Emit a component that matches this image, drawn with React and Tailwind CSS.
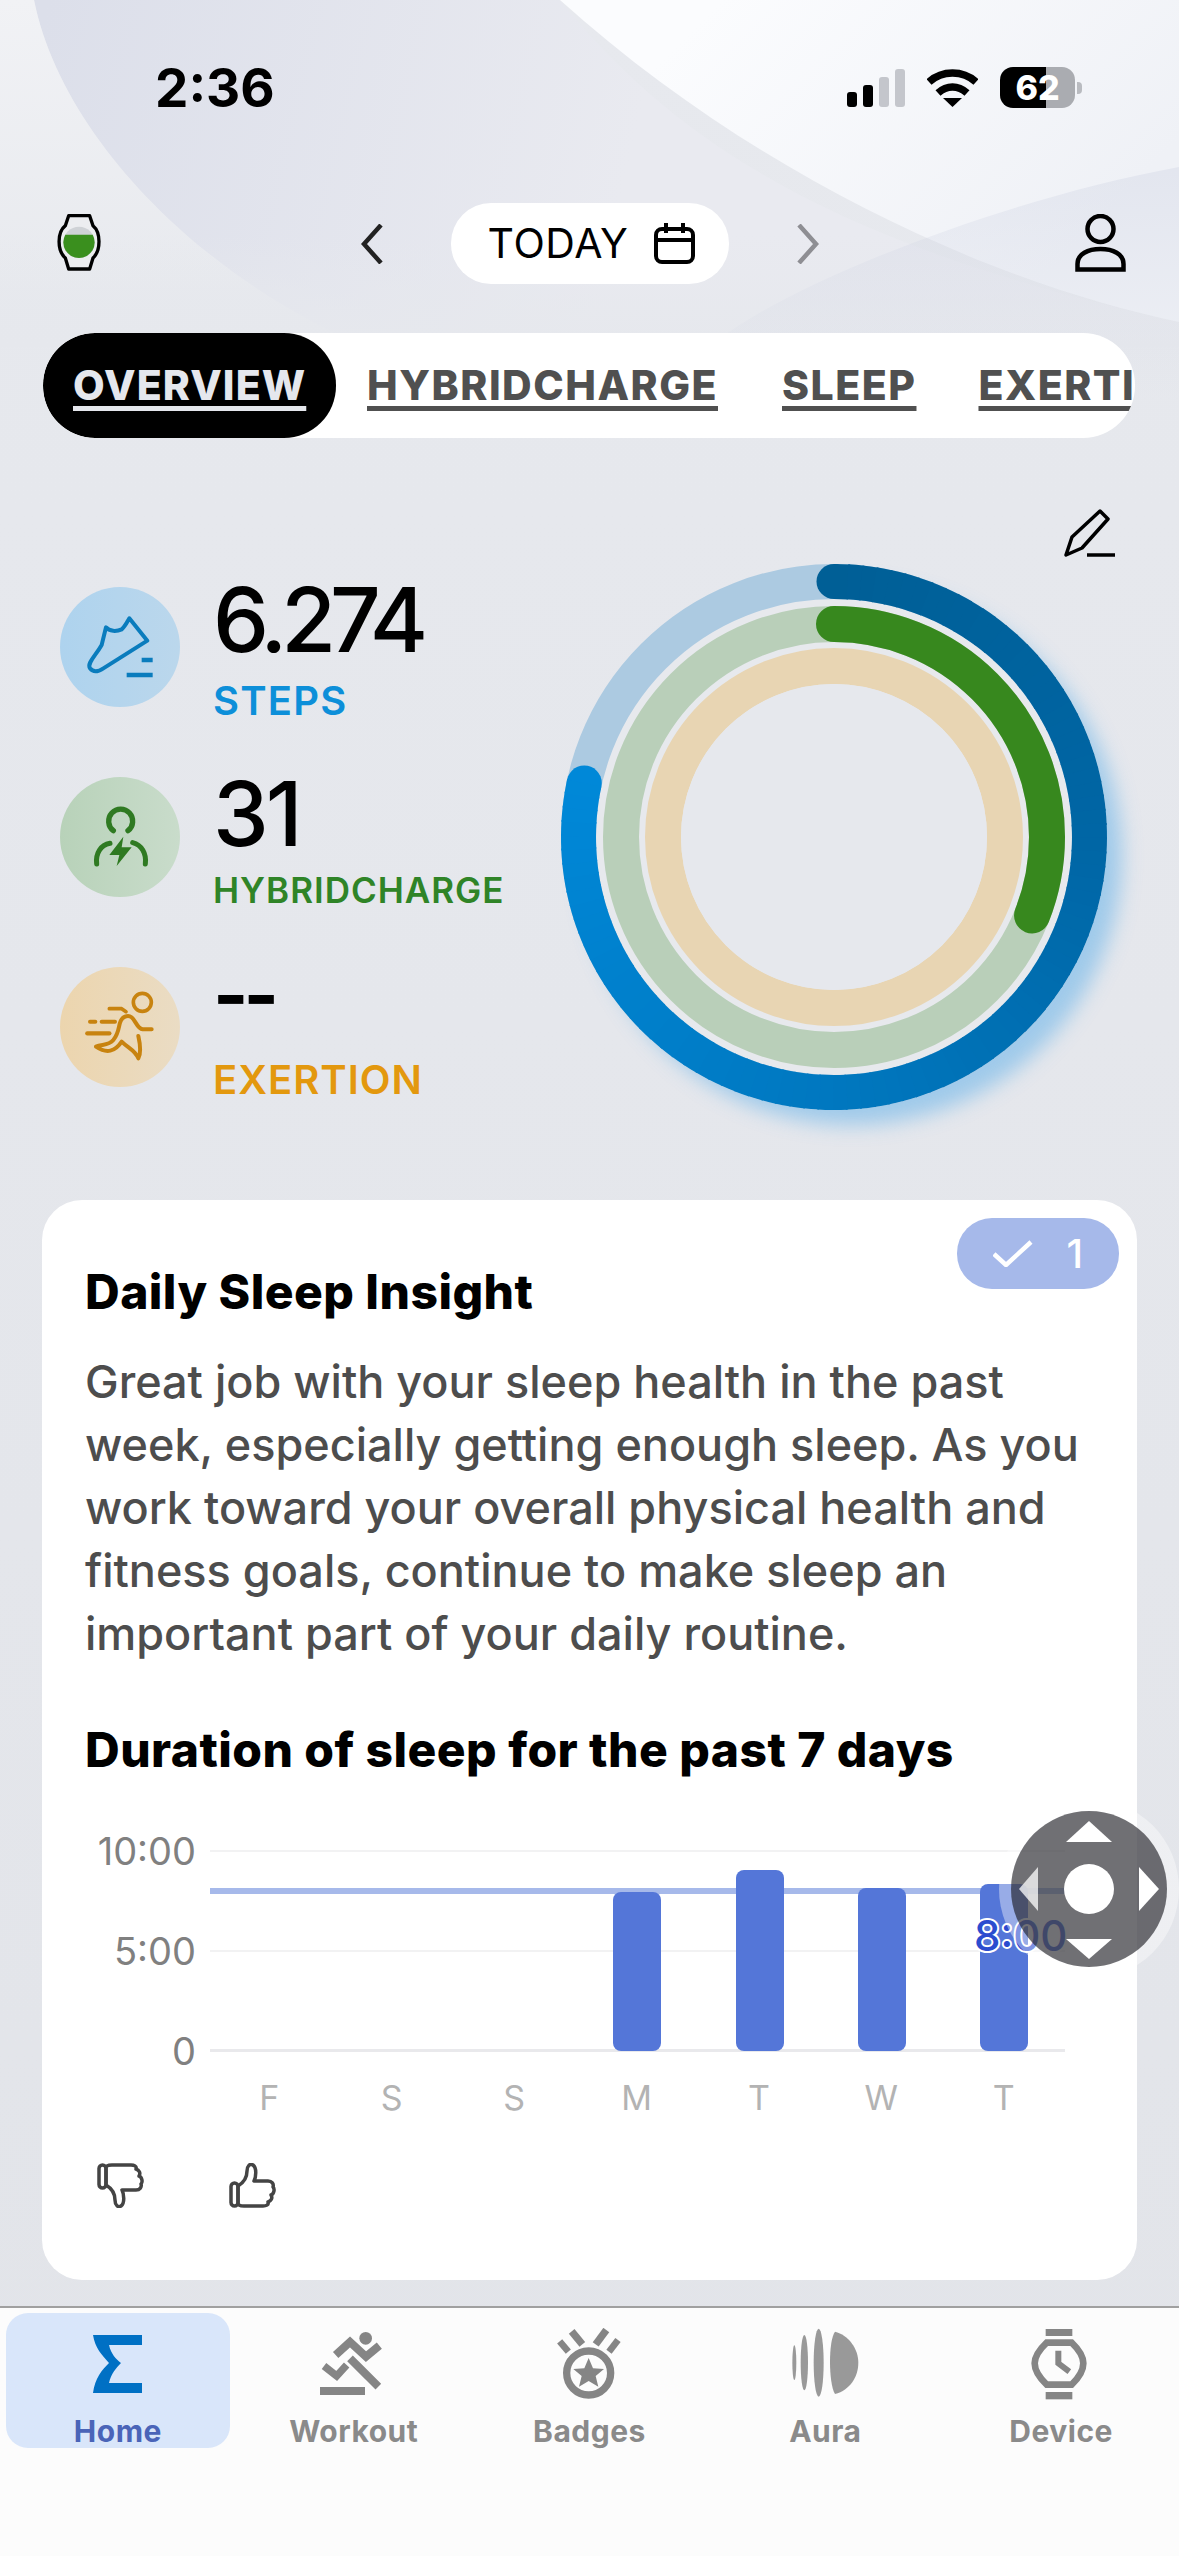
import React from "react";

const Chevron = ({ right, color }) => (
  <svg width="22" height="40" viewBox="0 0 22 40" fill="none" stroke={color} strokeWidth="4.5">
    <path d={right ? "M2 1 L19 20 L2 39" : "M20 1 L3 20 L20 39"} />
  </svg>
);

const Stat = ({ bg, icon, value, label, labelClass, valueClass, labelMt }) => (
  <div className="flex h-[120px] gap-[33px]">
    <div className={`h-[120px] w-[120px] shrink-0 rounded-full ${bg}`}>{icon}</div>
    <div className="flex flex-col">
      <div className={`h-[84px] leading-[84px] text-black ${valueClass}`}>{value}</div>
      <div className={`whitespace-nowrap font-semibold ${labelClass} ${labelMt}`}>{label}</div>
    </div>
  </div>
);

const Thumb = ({ down }) => (
  <svg width="47" height="45" viewBox="0 0 47 45" fill="none" stroke="#444" strokeWidth="3.5" strokeLinejoin="round">
    <g transform={down ? "translate(0 45) scale(1 -1)" : undefined}>
      <rect x="2" y="20" width="7" height="23" rx="3.5" />
      <path d="M9 23 C14 20 18 15 18 8 C18 3 21 0 24 2 C28 5 27 14 25 18 L39 18 C43 18 45 21 44 24 C46 26 45 31 42 32 C44 35 42 38 39 39 C40 42 37 43 34 43 L15 43 C12 43 9 42 9 40 Z" />
    </g>
  </svg>
);

const days = ["F", "S", "S", "M", "T", "W", "T"];
const bars = [0, 0, 0, 159, 181, 163, 167];

// the blue ring changes hue along its arc, so it is drawn as short computed segments
const ringStops = [
  [0, [0, 95, 150]],
  [90, [0, 102, 165]],
  [180, [0, 120, 192]],
  [282, [0, 136, 216]],
];
const ringColor = (a) => {
  for (let i = 1; i < ringStops.length; i++) {
    const [a1, c1] = ringStops[i];
    const [a0, c0] = ringStops[i - 1];
    if (a <= a1) {
      const t = (a - a0) / (a1 - a0);
      return `rgb(${c0.map((v, k) => Math.round(v + (c1[k] - v) * t)).join(",")})`;
    }
  }
  return "rgb(0,136,216)";
};
const ringPoint = (a, r = 255.5) => {
  const rad = (a * Math.PI) / 180;
  return [273 + r * Math.sin(rad), 273 - r * Math.cos(rad)];
};
const ringEnd = 282.2;
const ringSegs = Array.from({ length: 94 }, (_, i) => {
  const a0 = (i * ringEnd) / 94;
  const a1 = Math.min(((i + 1) * ringEnd) / 94 + 0.4, ringEnd);
  const [x0, y0] = ringPoint(a0);
  const [x1, y1] = ringPoint(a1);
  return { d: `M${x0} ${y0} A255.5 255.5 0 0 1 ${x1} ${y1}`, c: ringColor(a0) };
});
const [endX, endY] = ringPoint(ringEnd);

const navItems = [
  {
    label: "Workout",
    vb: "42 24 240 216",
    art: (
      <g fill="none" stroke="#858585">
        <circle cx="197" cy="55" r="19" fill="#858585" stroke="none" />
        <path d="M107 105 L150 66 L198 110 L238 77" strokeWidth="24" />
        <path d="M150 115 L235 200" strokeWidth="24" />
        <path d="M72 138 L110 168 L140 135" strokeWidth="22" />
        <rect x="60" y="201" width="135" height="24" fill="#858585" stroke="none" />
      </g>
    ),
  },
  {
    label: "Badges",
    vb: "748 24 240 216",
    art: (
      <g fill="none" stroke="#858585">
        <circle cx="867" cy="159" r="66" strokeWidth="22" />
        <path d="M867 114 L880 145 L913 147 L888 168 L896 200 L867 183 L838 200 L846 168 L821 147 L854 145 Z" fill="#858585" stroke="none" />
        <path d="M780 64 L806 95" strokeWidth="20" />
        <path d="M816 34 L848 73" strokeWidth="22" />
        <path d="M920 30 L888 73" strokeWidth="22" />
        <path d="M955 60 L928 95" strokeWidth="20" />
      </g>
    ),
  },
  {
    label: "Aura",
    vb: "15 24 240 216",
    art: (
      <g fill="#999">
        <ellipse cx="43" cy="128" rx="6" ry="52" />
        <ellipse cx="73" cy="128" rx="11" ry="83" />
        <ellipse cx="116" cy="128" rx="15" ry="102" />
        <path d="M165 35 C145 60 145 190 165 222 C210 210 235 170 235 128 C235 85 205 45 165 35 Z" />
      </g>
    ),
  },
  {
    label: "Device",
    vb: "723 24 240 216",
    art: (
      <g fill="none" stroke="#858585">
        <rect x="797" y="27" width="80" height="21" fill="#858585" stroke="none" />
        <rect x="797" y="216" width="80" height="22" fill="#858585" stroke="none" />
        <path d="M800 68 L875 68 C898 90 910 110 910 130 C910 150 898 172 875 194 L800 194 C777 172 764 150 764 130 C764 110 777 90 800 68 Z" strokeWidth="20" />
        <path d="M835 92 L835 130 L868 155" strokeWidth="18" />
      </g>
    ),
  },
];

export default function App() {
  return (
    <div className="relative h-[2556px] w-[1179px] overflow-hidden bg-[linear-gradient(#e7e9ee,#e2e4e9)] font-[Inter,sans-serif]">
      {/* decorative wallpaper */}
      <svg className="absolute left-0 top-0" width="1179" height="460" viewBox="0 0 1179 460" fill="none">
        <defs>
          <linearGradient id="bgL" x1="0" y1="0" x2="0" y2="1">
            <stop offset="0" stopColor="#f1f2f5" />
            <stop offset="1" stopColor="#e6e8ed" />
          </linearGradient>
          <linearGradient id="bgB" gradientUnits="userSpaceOnUse" x1="34" y1="60" x2="620" y2="200">
            <stop offset="0" stopColor="#dcdfea" />
            <stop offset="1" stopColor="#e9eaf0" />
          </linearGradient>
          <linearGradient id="bgW" gradientUnits="userSpaceOnUse" x1="700" y1="20" x2="1000" y2="320">
            <stop offset="0" stopColor="#fbfcfe" />
            <stop offset="1" stopColor="#eff1f6" />
          </linearGradient>
          <linearGradient id="bgC" x1="0" y1="0" x2="0" y2="1">
            <stop offset="0" stopColor="#cdd2e2" stopOpacity="0.36" />
            <stop offset="1" stopColor="#cdd2e2" stopOpacity="0" />
          </linearGradient>
          <linearGradient id="bgF" x1="0" y1="0" x2="0" y2="1">
            <stop offset="0" stopColor="#e6e8ed" stopOpacity="0" />
            <stop offset="1" stopColor="#e6e8ed" stopOpacity="1" />
          </linearGradient>
        </defs>
        <path d="M34 0 L560 0 C680 150 850 250 1179 322 L1179 345 L360 345 C190 270 60 130 34 0 Z" fill="url(#bgB)" />
        <path d="M0 0 L34 0 C60 130 190 270 360 345 L0 345 Z" fill="url(#bgL)" />
        <rect x="0" y="235" width="1179" height="112" fill="url(#bgF)" />
        <path d="M560 0 L1179 0 L1179 322 C1000 285 760 180 560 0 Z" fill="url(#bgW)" />
        <path d="M725 335 C800 280 1000 200 1179 167 L1179 400 L725 400 Z" fill="url(#bgC)" />
      </svg>

      <div className="relative">
        {/* status bar */}
        <div className="flex h-[108px] items-end justify-between pl-[155px] pr-[97px]">
          <div className="h-[40px] text-[53px] leading-[41px] font-bold text-black">2:36</div>
          <div className="flex h-[41px] items-center">
            <svg width="58" height="38" viewBox="0 0 58 38">
              <rect x="0" y="23" width="10" height="15" rx="3" fill="#000" />
              <rect x="16" y="16" width="10" height="22" rx="3" fill="#000" />
              <rect x="32" y="8" width="10" height="30" rx="3" fill="#c4c6cc" />
              <rect x="48" y="0" width="10" height="38" rx="3" fill="#c4c6cc" />
            </svg>
            <svg className="ml-[22px]" width="51" height="38" viewBox="0 0 51 38" fill="none" stroke="#000">
              <path d="M2 13 C15 1 36 1 49 13" strokeWidth="7.5" />
              <path d="M11 24 C20 16 31 16 40 24" strokeWidth="7.5" />
              <path d="M16 29 L35 29 L25.5 38 Z" fill="#000" stroke="none" />
            </svg>
            <div className="ml-[22px] flex h-[41px] w-[75px] items-center justify-center rounded-[13px] bg-[linear-gradient(90deg,#000_0,#000_62%,#aaacb1_62%,#aaacb1_100%)] text-[34px] leading-[41px] font-extrabold text-white">
              62
            </div>
            <div className="ml-[2px] h-[12px] w-[5px] rounded-r-[4px] bg-[#b9bbc0]" />
          </div>
        </div>

        {/* date row */}
        <div className="mt-[95px] grid h-[81px] grid-cols-[1fr_auto_1fr] items-center px-[53px]">
          <svg className="mb-[3px] ml-[4px]" width="44" height="58" viewBox="50 27 132 174" overflow="visible">
            <path d="M85 35 L148 35 L158 65 C182 85 182 140 158 162 L148 195 L85 195 L75 162 C50 140 50 85 75 65 Z" fill="#ecedf0" stroke="#000" strokeWidth="10" strokeLinejoin="round" />
            <circle cx="116" cy="115" r="47" fill="#cfd2d6" />
            <path d="M75 92 L157 92 A47 47 0 1 1 75 92 Z" fill="#3a8f1e" />
          </svg>
          <div className="flex items-center">
            <Chevron color="#222" />
            <div className="mx-[68px] flex h-[81px] w-[278px] items-center justify-center gap-[26px] rounded-[40px] bg-white pl-[4px] text-[41px] leading-[81px] tracking-[0.6px] text-black">
              <span>TODAY</span>
              <svg width="41" height="41" viewBox="0 0 41 41" fill="none" stroke="#000" strokeWidth="4">
                <rect x="2" y="6" width="37" height="33" rx="6" />
                <path d="M2 17 H39 M12 0 V10 M29 0 V10" />
              </svg>
            </div>
            <Chevron right color="#8e8e93" />
          </div>
          <svg className="mb-[1px] justify-self-end" width="51" height="58" viewBox="0 0 51 58" fill="none" stroke="#000" strokeWidth="4.5">
            <circle cx="25.5" cy="15" r="13" />
            <path d="M2.5 55.5 V50 C2.5 40 13 35 25.5 35 C38 35 48.5 40 48.5 50 V55.5 Z" />
          </svg>
        </div>

        {/* tabs */}
        <div className="ml-[43px] mt-[49px] flex h-[105px] w-[1092px] items-center overflow-hidden rounded-[52px] bg-white text-[41px] leading-[105px] font-extrabold tracking-[1.5px] whitespace-nowrap text-[#505050]">
          <div className="h-[105px] w-[293px] shrink-0 rounded-[52px] bg-black pl-[30px] tracking-[1.1px] text-[#e5e7ed]">
            <span className="underline decoration-[5px] underline-offset-[6px]">OVERVIEW</span>
          </div>
          <div className="shrink-0 pl-[31px] pr-[33px]">
            <span className="underline decoration-[5px] underline-offset-[6px]">HYBRIDCHARGE</span>
          </div>
          <div className="shrink-0 px-[31px]">
            <span className="underline decoration-[5px] underline-offset-[6px]">SLEEP</span>
          </div>
          <div className="shrink-0 px-[31px]">
            <span className="underline decoration-[5px] underline-offset-[6px]">EXERTION</span>
          </div>
        </div>

        {/* overview */}
        <div className="flex justify-between">
          <div className="ml-[60px] mt-[149px] flex flex-col gap-[70px]">
            <Stat
              bg="bg-[linear-gradient(90deg,#aed3ee,#bbd7ec)]"
              value="6.274"
              valueClass="-mt-[9px] text-[89px] font-medium tracking-[-6px]"
              label="STEPS"
              labelMt="mt-[19px]"
              labelClass="h-[40px] text-[40px] leading-[40px] tracking-[1.2px] text-[#0d8fd9]"
              icon={
                <svg width="120" height="120" viewBox="-30 -39 360 360" fill="none" stroke="#0a7cbd">
                  <path d="M108 82 C118 95 140 95 155 88 C165 80 172 65 178 55 L232 122 L100 205 C85 215 70 218 60 205 C50 190 75 170 95 135 Z" strokeWidth="12" strokeLinejoin="round" />
                  <path d="M215 180 H248 M170 225 H248" strokeWidth="13" />
                </svg>
              }
            />
            <Stat
              bg="bg-[linear-gradient(90deg,#b8d2b9,#c9dccb)]"
              value="31"
              valueClass="-mt-[5px] text-[89px] font-medium tracking-[-3px]"
              label="HYBRIDCHARGE"
              labelMt="mt-[14px]"
              labelClass="h-[40px] text-[35px] leading-[40px] tracking-[1px] text-[#2f8427]"
              icon={
                <svg width="120" height="120" viewBox="-30 -39 360 360" fill="none" stroke="#2f7a22">
                  <path d="M130 122 A36 36 0 1 1 174 122" strokeWidth="16" strokeLinecap="round" />
                  <path d="M80 222 C76 190 92 165 120 160 M226 222 C230 190 215 165 188 158" strokeWidth="15" strokeLinecap="round" />
                  <path d="M160 140 L118 195 L148 195 L140 228 L185 172 L155 172 Z" fill="#2f7a22" stroke="none" />
                </svg>
              }
            />
            <Stat
              bg="bg-[linear-gradient(90deg,#ecd5ae,#eadcc4)]"
              value="--"
              valueClass="-mt-[15px] text-[76px] font-bold tracking-[-5px]"
              label="EXERTION"
              labelMt="mt-[24px]"
              labelClass="h-[40px] text-[40px] leading-[40px] tracking-[1px] text-[#e3980e]"
              icon={
                <svg width="120" height="120" viewBox="-30 531 360 360" fill="none" stroke="#c8830f" strokeLinecap="round" strokeLinejoin="round">
                  <circle cx="217" cy="637" r="27" strokeWidth="11" />
                  <path d="M118 656 H155 L168 665" strokeWidth="11" />
                  <path d="M60 695 H76" strokeWidth="12" />
                  <path d="M95 695 H135" strokeWidth="12" />
                  <path d="M52 730 H118" strokeWidth="13" />
                  <path d="M245 718 H218 C195 715 195 668 165 680 C140 692 155 720 130 750 C115 768 95 762 78 770 C110 792 135 785 155 755 C175 775 195 780 205 805 C213 790 210 760 205 738" strokeWidth="12" />
                </svg>
              }
            />
          </div>

          <div className="mr-[64px] flex flex-col items-end">
            <svg className="mt-[71px]" width="51" height="48" viewBox="0 0 51 48" fill="none" stroke="#000" strokeWidth="3.5" strokeLinejoin="round">
              <path d="M2 46 L8 28 L36 2 L44 10 L18 39 Z" />
              <path d="M23 46 H51" />
            </svg>
            <svg className="mr-[8px] mt-[7px]" width="546" height="546" viewBox="0 0 546 546" fill="none" overflow="visible">
              <defs>
                <filter id="glow" x="-20%" y="-20%" width="140%" height="140%">
                  <feGaussianBlur stdDeviation="10" />
                </filter>
              </defs>
              <circle cx="291" cy="291" r="270" fill="#8ec3ea" opacity="0.8" filter="url(#glow)" />
              <circle cx="273" cy="273" r="273" fill="#e7e9ed" />
              <circle cx="273" cy="273" r="255.5" stroke="#accae1" strokeWidth="35" />
              <circle cx="273" cy="17.5" r="17.5" fill="rgb(0,95,150)" />
              <circle cx={endX} cy={endY} r="17.5" fill="rgb(0,136,216)" />
              {ringSegs.map((s, i) => (
                <path key={i} d={s.d} stroke={s.c} strokeWidth="35" />
              ))}
              <circle cx="273" cy="273" r="213" stroke="#b9cfb9" strokeWidth="36" />
              <circle cx="273" cy="273" r="213" stroke="#37881e" strokeWidth="36" strokeLinecap="round" pathLength="100" strokeDasharray="31 200" transform="rotate(-90 273 273)" />
              <circle cx="273" cy="273" r="171" stroke="#e8d5b3" strokeWidth="36" />
              <circle cx="273" cy="273" r="153" fill="#e6e8ed" />
            </svg>
          </div>
        </div>

        {/* card */}
        <div className="relative ml-[42px] mt-[90px] h-[1080px] w-[1095px] rounded-[40px] bg-white pl-[43px] pt-[62px]">
          <div className="absolute right-[18px] top-[18px] flex h-[71px] w-[162px] items-center justify-between rounded-[35px] bg-[#a6b9ea] pl-[36px] pr-[36px]">
            <svg width="40" height="27" viewBox="0 0 40 27" fill="none" stroke="#fff" strokeWidth="4.5">
              <path d="M1 14 L13 25 L38 2" />
            </svg>
            <span className="text-[40px] leading-[71px] font-medium text-white">1</span>
          </div>

          <div className="h-[60px] text-[48px] leading-[60px] font-extrabold tracking-[0.45px] text-black">Daily Sleep Insight</div>
          <div className="mt-[28px] w-[1020px] text-[45px] leading-[63px] font-medium text-[#4d4d4d]">
            Great job with your sleep health in the past
            <br />
            week, especially getting enough sleep. As you
            <br />
            work toward your overall physical health and
            <br />
            fitness goals, continue to make sleep an
            <br />
            important part of your daily routine.
          </div>
          <div className="mt-[55px] h-[60px] text-[48px] leading-[60px] font-extrabold tracking-[0.45px] text-black">Duration of sleep for the past 7 days</div>

          {/* chart */}
          <div className="mt-[51px] flex">
            <div className="flex h-[240px] w-[111px] flex-col justify-between text-right text-[38px] leading-[40px] text-[#808080]">
              <div>10:00</div>
              <div>5:00</div>
              <div>0</div>
            </div>
            <div className="ml-[14px] w-[855px]">
              <div className="relative h-[240px]">
                <div className="absolute left-0 right-0 top-[19px] h-[2px] bg-[#f2f2f3]" />
                <div className="absolute left-0 right-0 top-[119px] h-[2px] bg-[#f2f2f3]" />
                <div className="absolute left-0 right-0 top-[218px] h-[3px] bg-[#e9e9ec]" />
                <div className="absolute left-0 right-0 top-[57px] h-[6px] bg-[#a6b9ea]" />
                <div className="relative grid h-[220px] grid-cols-7 items-end">
                  {bars.map((h, i) => (
                    <div key={i} className="flex justify-center">
                      {h > 0 && <div className="w-[48px] rounded-[8px] bg-[#5476d8]" style={{ height: h }} />}
                    </div>
                  ))}
                </div>
                <div className="absolute left-[764px] top-[83px] text-[42px] leading-[44px] font-medium text-[#2b4ccf] [paint-order:stroke_fill] [-webkit-text-stroke:4px_white]">8:00</div>
              </div>
              <div className="-ml-[2px] mt-[7px] grid grid-cols-7 text-center text-[34px] leading-[40px] text-[#b3b3b3]">
                {days.map((d, i) => (
                  <div key={i}>{d}</div>
                ))}
              </div>
            </div>
          </div>

          {/* feedback */}
          <div className="ml-[12px] mt-[45px] flex gap-[85px]">
            <Thumb down />
            <Thumb />
          </div>
        </div>

        {/* bottom nav */}
        <div className="mt-[26px] h-[250px] border-t-2 border-[#a0a0a0] bg-[#fcfcfc] pt-[5px]">
          <div className="grid grid-cols-5">
            <div className="ml-[6px] mr-[6px] flex h-[135px] flex-col items-center rounded-[22px] bg-[#d9e6fa] pt-[15px]">
              <svg width="80" height="72" viewBox="0 0 80 72">
                <path d="M15 7 H64 V17 H31 C33 26 38 31 43 35 C38 40 33 46 31 55 H64 V65 H15 C17 50 24 42 31 35 C24 27 17 20 15 7 Z" fill="#0070c4" />
              </svg>
              <div className="mt-[14px] h-[34px] text-[30px] leading-[34px] font-bold tracking-[0.5px] text-[#4a64b8]">Home</div>
            </div>
            {navItems.map((n) => (
              <div key={n.label} className="flex h-[135px] flex-col items-center pt-[15px]">
                <svg width="80" height="72" viewBox={n.vb}>
                  {n.art}
                </svg>
                <div className="mt-[14px] h-[34px] text-[30px] leading-[34px] font-bold tracking-[0.5px] text-[#8a8a8a]">{n.label}</div>
              </div>
            ))}
          </div>
        </div>
      </div>

      {/* assistive touch */}
      <div className="absolute left-[999px] top-[1799px] flex h-[180px] w-[180px] items-center justify-center rounded-full bg-white/40">
        <div className="flex h-[156px] w-[156px] items-center justify-center rounded-full bg-[rgba(25,25,30,0.62)]">
          <svg width="156" height="156" viewBox="0 0 156 156" fill="#fff">
            <path d="M78 10 L101 31 L55 31 Z" />
            <path d="M55 128 L101 128 L78 148 Z" />
            <path d="M8 78 L27 56 L27 100 Z" fill="#fff" fillOpacity="0.75" />
            <path d="M148 78 L128 56 L128 100 Z" />
            <circle cx="78" cy="78" r="25" />
          </svg>
        </div>
      </div>
    </div>
  );
}
